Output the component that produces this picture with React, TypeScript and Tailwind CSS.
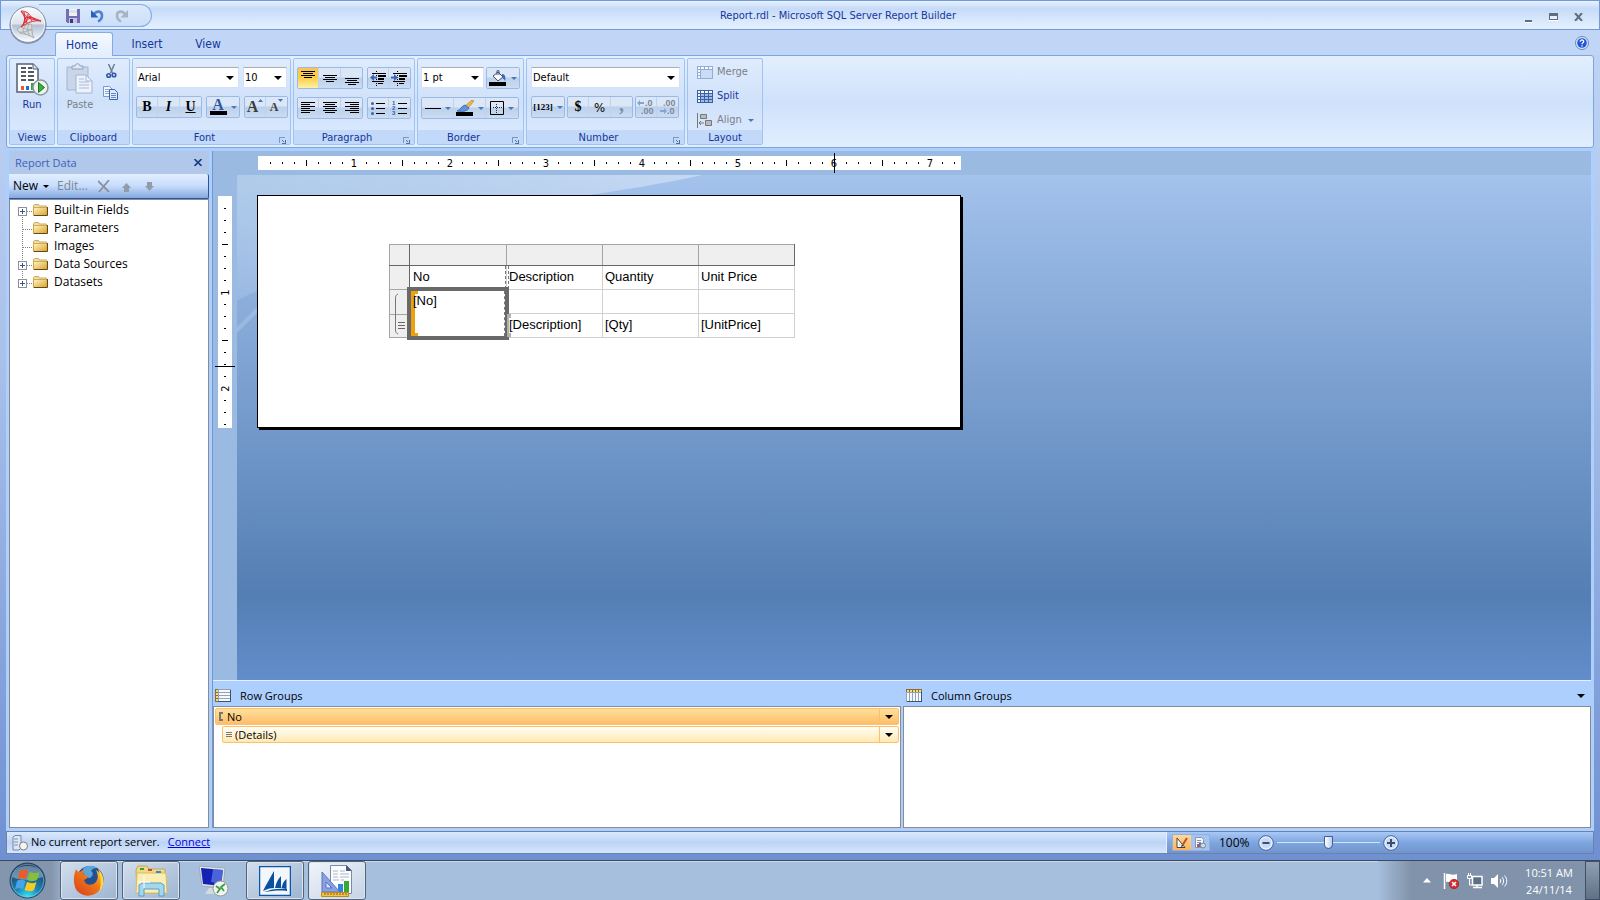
import { clsx } from "clsx"
import type { ReactNode } from "react"

const ui = "font-['Open_Sans','Noto_Sans',sans-serif]"
const tahoma = "font-['DejaVu_Sans_Condensed','DejaVu_Sans',sans-serif]"

/* ---------- small shared pieces ---------- */

function Caret({ className = "text-[#4a78b8]", size = 7 }: { className?: string; size?: number }) {
  return (
    <svg className={clsx("shrink-0", className)} width={size} height={Math.ceil(size / 2)} viewBox="0 0 8 4" preserveAspectRatio="none" aria-hidden="true">
      <path d="M0 0h8L4 4z" fill="currentColor" />
    </svg>
  )
}

function Combo({ label, value, className }: { label: string; value: string; className: string }) {
  return (
    <div className={clsx("relative h-[21px] border border-[#d3e2f6] border-t-[#abadb3] bg-white", className)}>
      <select aria-label={label} defaultValue={value} className={clsx(tahoma, "h-full w-full appearance-none bg-transparent pl-px text-[11px] leading-4 text-black outline-none")}>
        <option>{value}</option>
      </select>
      <span className="pointer-events-none absolute top-2 right-1">
        <Caret className="text-black" size={8} />
      </span>
    </div>
  )
}

function ButtonSet({ children }: { children: ReactNode }) {
  return <div className="flex h-[22px] divide-x divide-[#bdd3f0] rounded-[2px] border border-[#9ab9e4]">{children}</div>
}

function Tool({ label, active, wide, children }: { label: string; active?: boolean; wide?: boolean; children: ReactNode }) {
  return (
    <button
      type="button"
      aria-label={label}
      className={clsx(
        "flex h-full items-center justify-center gap-1",
        wide ? "w-8" : "w-[22px] first:w-[21px] last:w-[21px]",
        active
          ? "bg-linear-to-b from-[#fbc452] via-[#fbcf45] to-[#fff0a0]"
          : "bg-linear-to-b from-[#dbe7f6] from-45% via-[#bcd0ea] via-50% to-[#cbdcf2]",
      )}
    >
      {children}
      {wide && <Caret size={6} />}
    </button>
  )
}

function Group({ title, launcher, className, children }: { title: string; launcher?: boolean; className: string; children: ReactNode }) {
  return (
    <section aria-label={title} className={clsx("flex h-[87px] flex-col justify-between rounded-[2px] border border-[#9fc3f3] bg-linear-to-b from-[#e0ecfd] via-[#cfe1fa] to-[#dceafe]", className)}>
      {children}
      <div className={clsx("relative h-[14px] bg-[#c2d9f9] text-center text-[11px] leading-4 text-[#15369c]", launcher && "pr-[14px]")}>
        {title}
        {launcher && (
          <button type="button" aria-label={`${title} settings`} className="absolute right-1 bottom-0">
            <svg width="7" height="7" viewBox="0 0 7 7" shapeRendering="crispEdges">
              <path d="M0 6V0h6v1H1v5z" fill="#7d98bd" />
              <path d="M3 3h1v1H3zM4 4h1v1H4zM6 3h1v4H3V6h3z" fill="#51719e" />
            </svg>
          </button>
        )}
      </div>
    </section>
  )
}

function Lines({ rows, color = "#000" }: { rows: [number, number, number][]; color?: string }) {
  return (
    <svg width="16" height="16" viewBox="0 0 16 16" shapeRendering="crispEdges" aria-hidden="true">
      {rows.map(([x, y, w]) => (
        <rect key={`${x}-${y}`} x={x} y={y} width={w} height="1" fill={color} />
      ))}
    </svg>
  )
}

/* ---------- icons ---------- */

function OrbIcon() {
  return (
    <svg width="38" height="40" viewBox="0 0 38 40" aria-hidden="true">
      <defs>
        <linearGradient id="orb" x1="0" y1="0" x2="0" y2="1">
          <stop offset="0" stopColor="#fbfcfd" />
          <stop offset=".48" stopColor="#dde3ec" />
          <stop offset=".52" stopColor="#b3c1d6" />
          <stop offset="1" stopColor="#fdfeff" />
        </linearGradient>
      </defs>
      <circle cx="19" cy="20.500" r="18.500" fill="#51617d" opacity=".55" />
      <circle cx="19" cy="19.500" r="17.800" fill="url(#orb)" stroke="#8494ae" />
      <circle cx="19" cy="19.500" r="16.500" fill="none" stroke="#fff" opacity=".7" />
      <path d="M8 24c5-3 9-5 14-5l2 4c-1 4-1 7 1 10-4-1-6-3-9-4-3 0-6-1-8-5z" fill="#d8dade" />
      <path d="M8 24c5-3 9-5 14-5 2 5 0 9 3 14M8 24c2 5 6 5 9 5M12 22c3 2 8 3 11 3M17 20c-3 3-4 6-1 9 3 1 6 2 9 4M20 19c-2 4-2 8 1 12M10 27c4 1 9-1 13-3" fill="none" stroke="#a4a7ad" strokeWidth=".9" />
      <path d="M12 6c5 1 7 2 10 6l10 3c-8 0-14 2-20 7 4-4 5-9 0-16z" fill="#f7cfd1" opacity=".8" />
      <path d="M12 6c5 0 8 2 10 6l10 4c-8-1-14 2-20 6 4-4 6-8 0-16zM12 6c4 5 7 8 20 10M22 12c-3 2-6 5-10 10M15 7c1 5 1 8-1 13M19 9c0 4-1 6-3 9M16 13l6-1 5 3M18 18l-2-6M23 16l-3-5" fill="none" stroke="#d9303a" strokeWidth="1" />
    </svg>
  )
}

function SaveIcon() {
  return (
    <svg width="14" height="14" viewBox="0 0 14 14" shapeRendering="crispEdges" aria-hidden="true">
      <path d="M0 0h14v14H1l-1-1z" fill="#7270b2" />
      <path d="M3 0h8v7H3z" fill="#eef1f8" />
      <path d="M3 1h8v3H3z" fill="#dbe0ea" />
      <path d="M3 9h8v5H3z" fill="#c5c4e4" />
      <path d="M4 10h3v4H4z" fill="#3b3976" />
    </svg>
  )
}

function UndoIcon({ redo }: { redo?: boolean }) {
  return (
    <svg className={redo ? "-scale-x-100" : ""} width="13" height="14" viewBox="0 0 13 14" aria-hidden="true">
      <path d="M3 5.500C5 1.500 11 1.500 11 6.500c0 3-2 5-4 6" fill="none" stroke={redo ? "#a9b3c2" : "#4f83d6"} strokeWidth="2.600" />
      <path d="M0 1v7.500h7.500z" fill={redo ? "#a9b3c2" : "#2b5fba"} />
    </svg>
  )
}

function RunIcon() {
  return (
    <svg width="33" height="33" viewBox="0 0 33 33" aria-hidden="true">
      <path d="M1 1h16l5 5v23H1z" fill="#fff" stroke="#525f77" strokeWidth="1.500" />
      <path d="M17 1v5h5" fill="#dbe2ee" stroke="#525f77" />
      <path d="M5 5h5M12 5h4M5 9h5M12 9h6M5 13h5M12 13h6M5 17h5M12 17h6" stroke="#1d2431" strokeWidth="1.600" />
      <path d="M5 23h3v4H5z" fill="#f0562b" />
      <path d="M10 23h3v4h-3z" fill="#1e6fd0" />
      <path d="M15 20h3v7h-3z" fill="#35a53c" />
      <circle cx="24.500" cy="24.500" r="7.500" fill="#eef3f2" stroke="#8b98a0" strokeWidth="1.500" />
      <path d="M22.500 19.500l6 5-6 5z" fill="#3fae3c" stroke="#17761c" />
    </svg>
  )
}

function PasteIcon() {
  return (
    <svg width="28" height="31" viewBox="0 0 28 31" aria-hidden="true">
      <path d="M1 4h21v23H1z" fill="#c9d6ea" stroke="#a5b5d0" />
      <path d="M6 6V3h3c0-3 5-3 5 0h3v3z" fill="#dfe7f3" stroke="#8e9fbd" />
      <path d="M10 12h10l6 6v12H10z" fill="#edf3fc" stroke="#a4b4cf" />
      <path d="M20 12v6h6M13 16h5M13 19h10M13 22h10M13 25h10" fill="none" stroke="#a9bad6" />
    </svg>
  )
}

function CutIcon() {
  return (
    <svg width="11" height="15" viewBox="0 0 11 15" aria-hidden="true">
      <path d="M2.500 0l4 9M8.500 0l-4 9" stroke="#6e7e94" strokeWidth="1.500" />
      <circle cx="2.700" cy="11.500" r="1.800" fill="none" stroke="#2d57ad" strokeWidth="1.600" />
      <circle cx="8" cy="11" r="1.800" fill="none" stroke="#2d57ad" strokeWidth="1.600" />
    </svg>
  )
}

function CopyIcon() {
  return (
    <svg width="16" height="14" viewBox="0 0 16 14" aria-hidden="true">
      <path d="M.5.5h6l3 3v7h-9z" fill="#f2f7ff" stroke="#7f98c6" />
      <path d="M2 3.500h4M2 5.500h5M2 7.500h4" stroke="#86a7dd" />
      <path d="M6.500 3.500h5l3 3v7h-8z" fill="#dfeafc" stroke="#3d62ac" />
      <path d="M8 7.500h5M8 9.500h5M8 11.500h5" stroke="#5f88cf" />
    </svg>
  )
}

function IndentIcon({ increase }: { increase?: boolean }) {
  return (
    <svg width="17" height="16" viewBox="0 0 17 16" aria-hidden="true">
      <g shapeRendering="crispEdges">
        <path d="M2 3h14v1H2zM8 5h8v2H8zM8 8h6v2H8zM2 11h12v1H2zM8 13h5v1H8z" />
        <path d="M6 1h1v1H6zM6 3h1v1H6zM6 5h1v1H6zM6 7h1v1H6zM6 9h1v1H6zM6 11h1v1H6zM6 13h1v1H6zM6 15h1v1H6z" />
      </g>
      <path d={increase ? "M0 6.500h3V4l4 3.500L3 11V8.500H0z" : "M7 6.500H4V4L0 7.500 4 11V8.500h3z"} fill="#3a66b5" />
    </svg>
  )
}

function ListIcon({ numbered }: { numbered?: boolean }) {
  return (
    <svg width="16" height="16" viewBox="0 0 16 16" aria-hidden="true">
      <path d="M6 3h9v1H6zM6 8h9v1H6zM6 13h9v1H6z" shapeRendering="crispEdges" />
      {numbered ? (
        <g fill="#2f5dae" fontSize="6" fontWeight="bold" fontFamily="Liberation Sans, sans-serif">
          <text x="0" y="5">1</text>
          <text x="0" y="10">2</text>
          <text x="0" y="15">3</text>
        </g>
      ) : (
        <g fill="#3763b3">
          <circle cx="2.500" cy="3.500" r="1.500" />
          <circle cx="2.500" cy="8.500" r="1.500" />
          <circle cx="2.500" cy="13.500" r="1.500" />
        </g>
      )}
    </svg>
  )
}

function BucketIcon() {
  return (
    <svg width="18" height="16" viewBox="0 0 18 16" aria-hidden="true">
      <path d="M4 6l5-4 5 5-5 4z" fill="#f5f9ff" stroke="#40506b" />
      <path d="M8 5V1c0-1 2-1 2 0v4" fill="none" stroke="#40506b" />
      <path d="M13 4c3 0 4 3 3 7-1-2-2-3-3-3z" fill="#3a68b8" />
      <path d="M0 12h17v4H0z" />
    </svg>
  )
}

function BrushIcon() {
  return (
    <svg width="18" height="16" viewBox="0 0 18 16" aria-hidden="true">
      <path d="M16 0l2 1-6 7-3-2z" fill="#efbb3a" stroke="#9c7724" strokeWidth=".6" />
      <path d="M9 5l4 3c-1 3-6 4-12 3 4-1 4-5 8-6z" fill="#5f93e3" stroke="#2854a3" strokeWidth=".7" />
      <path d="M0 12h17v4H0z" />
    </svg>
  )
}

function BordersIcon() {
  return (
    <svg width="14" height="14" viewBox="0 0 14 14" aria-hidden="true">
      <path d="M.5.5h13v13H.5z" fill="none" stroke="#000" />
      <path d="M6.500 3v9M3 6.500h9" stroke="#333" strokeDasharray="1 1" />
    </svg>
  )
}

function GridIcon({ muted }: { muted?: boolean }) {
  const line = muted ? "#95abd0" : "#3c5f9e"
  return (
    <svg width="16" height="13" viewBox="0 0 16 13" shapeRendering="crispEdges" aria-hidden="true">
      <path d="M0 0h16v13H0z" fill={line} />
      <path d="M1 1h2v2H1zM4 1h3v2H4zM8 1h3v2H8zM12 1h3v2h-3zM1 4h2v2H1zM1 7h2v2H1zM1 10h2v2H1z" fill="#f4f8ff" />
      {muted ? <path d="M4 4h11v8H4z" fill="#c9dbf8" /> : <path d="M4 4h3v2H4zM8 4h3v2H8zM12 4h3v2h-3zM4 7h3v2H4zM8 7h3v2H8zM12 7h3v2h-3zM4 10h3v2H4zM8 10h3v2H8zM12 10h3v2h-3z" fill="#9dbcf0" />}
    </svg>
  )
}

function AlignIcon() {
  return (
    <svg width="16" height="15" viewBox="0 0 16 15" aria-hidden="true">
      <path d="M.5 0v15" stroke="#777" />
      <path d="M3.500 1.500h6v4h-6zM8.500 7.500h6v5h-6z" fill="#bbb" stroke="#777" />
      <path d="M2 10h5M4 8l-2 2 2 2" fill="none" stroke="#777" />
    </svg>
  )
}

function DecimalIcon({ increase }: { increase?: boolean }) {
  return (
    <svg width="18" height="16" viewBox="0 0 18 16" aria-hidden="true">
      <g fill="#7d8798" fontSize="9" fontWeight="bold" fontFamily="Liberation Sans, sans-serif">
        <text x={increase ? 8 : 4} y="7">{increase ? ".0" : ".00"}</text>
        <text x={increase ? 4 : 8} y="15">{increase ? ".00" : ".0"}</text>
      </g>
      <path d={increase ? "M0 4l3-3v2h4v2H3v2z" : "M8 12l-3-3v2H1v2h4v2z"} fill="#84a4d6" />
    </svg>
  )
}

function FolderIcon() {
  return (
    <svg width="15" height="12" viewBox="0 0 15 12" aria-hidden="true">
      <defs>
        <linearGradient id="folder" x1="0" y1="0" x2="1" y2="1">
          <stop offset="0" stopColor="#fff6c4" />
          <stop offset="1" stopColor="#dba129" />
        </linearGradient>
      </defs>
      <path d="M.5 1.500l1-1h4l1 1.500h7v9H.5z" fill="#f1dfa0" stroke="#c3ab6a" />
      <path d="M.5 3.500h13.500v8H.5z" fill="url(#folder)" stroke="#c99d3c" strokeWidth=".8" />
      <path d="M14.500 3v8.500H1" fill="none" stroke="#5e4a1d" />
    </svg>
  )
}

function GroupsIcon({ columns }: { columns?: boolean }) {
  return (
    <svg width="16" height="13" viewBox="0 0 16 13" shapeRendering="crispEdges" aria-hidden="true">
      <path d="M0 0h16v13H0z" fill="#93a2b8" />
      <path d="M15 1h1v12H1v-1h14z" fill="#42526e" />
      {columns ? (
        <>
          <path d="M0 0h16v3H0z" fill="#8c6d2a" />
          <path d="M1 1h2v2H1zM4 1h2v2H4zM7 1h2v2H7zM10 1h2v2h-2zM13 1h2v2h-2z" fill="#f4da84" />
          <path d="M1 4h2v8H1zM4 4h2v8H4zM7 4h2v8H7zM10 4h2v8h-2zM13 4h2v8h-2z" fill="#f7fafd" />
        </>
      ) : (
        <>
          <path d="M0 0h3v13H0z" fill="#8c6d2a" />
          <path d="M1 1h2v2H1zM1 4h2v2H1zM1 7h2v2H1zM1 10h2v2H1z" fill="#f4da84" />
          <path d="M4 1h11v2H4zM4 4h11v2H4zM4 7h11v2H4zM4 10h11v2H4z" fill="#f7fafd" />
        </>
      )}
    </svg>
  )
}

function ServerIcon() {
  return (
    <svg width="17" height="16" viewBox="0 0 17 16" aria-hidden="true">
      <path d="M1 2l2-1.500h6V13l-2 2H1z" fill="#dce6f4" stroke="#7488a8" />
      <path d="M2 4h4M2 7h4M2 10h4" stroke="#7f94b5" />
      <circle cx="11.500" cy="11" r="4" fill="#f4f4f4" stroke="#7f7f7f" />
    </svg>
  )
}

function StartIcon() {
  return (
    <svg width="37" height="37" viewBox="0 0 37 37" aria-hidden="true">
      <defs>
        <radialGradient id="start" cx=".5" cy=".98" r=".9">
          <stop offset="0" stopColor="#35e8fb" />
          <stop offset=".4" stopColor="#1b86b4" />
          <stop offset="1" stopColor="#1c3a5e" />
        </radialGradient>
      </defs>
      <circle cx="18.500" cy="18.500" r="17.500" fill="url(#start)" stroke="#25476b" />
      <circle cx="18.500" cy="18.500" r="16.300" fill="none" stroke="#9fc3da" opacity=".6" />
      <path d="M3 15C5 0 32 0 34 15c-9 3-22 4-31 0z" fill="#d4e8f5" opacity=".42" />
      <path d="M11 9c3-2 6-1 8 0l-2 8.500c-2-1-5-2-8.500 0z" fill="#ee5b25" />
      <path d="M20.500 10c3 1 6 2 10 0l-2.500 8c-3 1-6 2-9.500 0z" fill="#86bf38" />
      <path d="M8 19c3-2 6-1 8.500 0l-2.500 8.500c-2-1-5-2-8 0z" fill="#47a4e8" />
      <path d="M18 20c3 1 6 2 9.500 0l-2.500 8c-3 2-6 1-9.500 0z" fill="#fbc924" />
    </svg>
  )
}

function FirefoxIcon() {
  return (
    <svg width="32" height="32" viewBox="0 0 32 32" aria-hidden="true">
      <defs>
        <linearGradient id="fox" x1="0" y1="1" x2="1" y2="0">
          <stop offset="0" stopColor="#d93a1c" />
          <stop offset=".6" stopColor="#ef7a1a" />
          <stop offset="1" stopColor="#ffe23d" />
        </linearGradient>
      </defs>
      <circle cx="17" cy="14.500" r="13.500" fill="#24508f" />
      <path d="M10 4c4-4 10-4 14-1-3 0-5 1-6 3 3 2 2 5-1 7-4 0-8-4-7-9z" fill="#5aa6dc" />
      <path d="M3 4c1 2 2 3 4 3 2-2 4-2 5-2-2 2-2 4-1 5l4 1c0 2-2 3-4 4 1 5 7 6 11 3 4-4 3-9 1-13 9 6 9 15 3 21-8 8-21 5-24-4C0 16 1 9 3 4z" fill="url(#fox)" />
      <path d="M25 4c7 6 7 17 1 23 3-8 2-16-1-23z" fill="#ffd839" />
    </svg>
  )
}

function ExplorerIcon() {
  return (
    <svg width="33" height="32" viewBox="0 0 33 32" aria-hidden="true">
      <path d="M1 5l2-4h9l2 3h16l1 24H2z" fill="#eed88a" stroke="#c5a953" />
      <path d="M2 8h29l1 20H1z" fill="#fbeeb2" stroke="#d7bd68" />
      <path d="M5 3h4v2H5z" fill="#36a33c" />
      <path d="M13 4h4v2h-4z" fill="#d6452b" />
      <path d="M21 6h5v2h-5z" fill="#2f89d6" />
      <path d="M4 20l3-2h19l3 2v11h-5v-7H9v7H4z" fill="#a4d6ee" stroke="#5a9fc5" />
      <path d="M9 11v12M3 17h12" stroke="#fff" />
    </svg>
  )
}

function RemoteIcon() {
  return (
    <svg width="32" height="32" viewBox="0 0 32 32" aria-hidden="true">
      <path d="M12 23h9l2 6H8z" fill="#d5dadf" />
      <path d="M2 1l26 2-2 20L5 21z" fill="#dfe4ea" stroke="#a0a9b5" />
      <path d="M4 3l22 2-2 16L6 19z" fill="#1222b4" />
      <path d="M16 4l10 1-2 14-10-2z" fill="#6f90f5" opacity=".6" />
      <circle cx="23.500" cy="23.500" r="7.500" fill="#f1f4f0" stroke="#929a94" />
      <path d="M19 21l4 3-3 4M28 19l-4 3 3 4" fill="none" stroke="#3e9c46" strokeWidth="1.800" />
    </svg>
  )
}

function DynamicsIcon() {
  return (
    <svg width="32" height="30" viewBox="0 0 32 30" aria-hidden="true">
      <path d="M.5.500h31v29H.5z" fill="#f3f6fa" stroke="#0c58a8" strokeWidth="1.500" />
      <path d="M4 25c3-6 7-13 11-20v17c-4 0-7 1-11 3zM16 22c1-5 3-9 6-12v12zM22.500 22c1-4 2-7 5-9v10z" fill="#0b4fa0" />
      <path d="M5 26c7-3 15-4 23-3v2c-8-1-15 0-23 1z" fill="#0b4fa0" />
    </svg>
  )
}

function ReportBuilderIcon() {
  return (
    <svg width="32" height="32" viewBox="0 0 32 32" aria-hidden="true">
      <path d="M9.500.5h16l5 5v23h-21z" fill="#fafcfe" stroke="#7c8ba5" />
      <path d="M25 0v6h6" fill="#4a5a78" />
      <path d="M12 6h5M19 6h5M12 9h5M19 9h9M12 12h5M19 12h9M12 15h6M20 15h3" stroke="#aeb8ca" />
      <path d="M17 19h5v8h-5z" fill="#2f85d8" />
      <path d="M23 16h5v11h-5z" fill="#39a932" />
      <path d="M1 7v20h18zM5 17v6h6z" fill="#8ba0e4" fillRule="evenodd" stroke="#5d73bd" />
      <path d="M.5 27.500h27v4H.5z" fill="#f2c24a" stroke="#b98b24" />
      <path d="M4 28v2M7 28v2M10 28v2M13 28v2M16 28v2M19 28v2M22 28v2M25 28v2" stroke="#7f5e15" />
    </svg>
  )
}

/* ---------- title bar + ribbon ---------- */

function TitleBar() {
  return (
    <header className="relative z-20 flex h-[30px] items-center border border-[#6f9adb] bg-linear-to-b from-[#e8f2ff] via-[#c6dbf8] via-28% to-[#e6f1ff]">
      <button type="button" aria-label="Report Builder menu" className="absolute top-1 left-2">
        <OrbIcon />
      </button>
      <div className="ml-[38px] flex h-[23px] w-[113px] items-center gap-[11px] rounded-r-full border border-l-0 border-[#86abe2] bg-linear-to-b from-[#dce9fb] to-[#cbdff9] pt-[2px] pl-[27px]">
        <button type="button" aria-label="Save"><SaveIcon /></button>
        <button type="button" aria-label="Undo"><UndoIcon /></button>
        <button type="button" aria-label="Redo"><UndoIcon redo /></button>
      </div>
      <h1 className="flex-1 pt-[2px] text-center text-[11px] text-[#15369c]">Report.rdl - Microsoft SQL Server Report Builder</h1>
      <div className="flex items-center gap-4 pt-1 pr-4">
        <button type="button" aria-label="Minimize">
          <svg width="9" height="12" viewBox="0 0 9 12" shapeRendering="crispEdges"><path d="M1 9h7v2H1z" fill="#5f6d80" /><path d="M1 11h7v1H1z" fill="#fff" /></svg>
        </button>
        <button type="button" aria-label="Restore">
          <svg width="9" height="8" viewBox="0 0 9 8" shapeRendering="crispEdges"><path d="M0 0h9v7H0z" fill="#5f6d80" /><path d="M1 3h7v3H1z" fill="#e8f0fb" /><path d="M0 7h9v1H0z" fill="#fff" /></svg>
        </button>
        <button type="button" aria-label="Close">
          <svg width="9" height="8" viewBox="0 0 9 8"><path d="M1 0l7 8M8 0L1 8" stroke="#5f6d80" strokeWidth="2" /></svg>
        </button>
      </div>
    </header>
  )
}

function TabRow() {
  return (
    <nav className="flex h-[25px] items-end bg-[#c1d6f6] pr-[11px] pl-[55px] text-[12px] leading-4 text-[#15369c]">
      <a href="#home" className="z-10 -mb-px flex h-6 w-[58px] items-center justify-center rounded-t-[3px] border border-b-0 border-[#84abe5] bg-linear-to-b from-[#f5f9ff] to-[#e3eefd] pr-1 pt-px">Home</a>
      <a href="#insert" className="flex h-[22px] w-[68px] items-center justify-center">Insert</a>
      <a href="#view" className="flex h-[22px] w-[54px] items-center justify-center">View</a>
      <button type="button" aria-label="Help" className="mb-[5px] ml-auto">
        <svg width="14" height="14" viewBox="0 0 14 14">
          <circle cx="7" cy="7" r="6.500" fill="#dbe8fb" stroke="#6b88c0" />
          <circle cx="7" cy="7" r="4.800" fill="#1e56d6" />
          <path d="M5.200 5.700c0-2.400 3.700-2.200 3.500 0C8.600 6.900 7 6.800 7 8.200M7 9.200v1.300" stroke="#fff" strokeWidth="1.300" fill="none" />
        </svg>
      </button>
    </nav>
  )
}

const serif = "font-['Liberation_Serif',serif] font-bold text-black leading-none"

function Ribbon() {
  return (
    <div className="mx-[6px] flex gap-[2px] rounded-[3px] border border-[#7fa5de] bg-linear-to-b from-[#e3effe] via-[#cfe1fb] to-[#e1eefe] p-[2px] text-[11px] text-[#15369c]">
      <Group title="Views" className="w-[46px]">
        <button type="button" className="flex flex-col items-center gap-px pt-1 leading-4">
          <RunIcon />
          Run
        </button>
      </Group>
      <Group title="Clipboard" className="w-[73px]">
        <div className="flex justify-between pt-1 pr-[10px] pl-2">
          <button type="button" className="flex flex-col items-center gap-[3px] leading-4 text-[#7a7f88]">
            <PasteIcon />
            Paste
          </button>
          <div className="flex flex-col items-center gap-[7px] pt-px">
            <button type="button" aria-label="Cut"><CutIcon /></button>
            <button type="button" aria-label="Copy"><CopyIcon /></button>
          </div>
        </div>
      </Group>
      <Group title="Font" launcher className="w-[159px]">
        <div className="flex flex-col gap-2 px-[3px] pt-2">
          <div className="flex gap-1">
            <Combo label="Font family" value="Arial" className="w-[103px]" />
            <Combo label="Font size" value="10" className="w-11" />
          </div>
          <div className="flex gap-1">
            <ButtonSet>
              <Tool label="Bold"><b className={clsx(serif, "text-[14px]")}>B</b></Tool>
              <Tool label="Italic"><i className={clsx(serif, "text-[14px]")}>I</i></Tool>
              <Tool label="Underline"><u className={clsx(serif, "text-[14px]")}>U</u></Tool>
            </ButtonSet>
            <ButtonSet>
              <Tool label="Font color" wide>
                <span className="flex h-4 w-[17px] items-center justify-center border-b-4 border-black font-['Liberation_Serif',serif] text-[16px] leading-none font-bold text-[#2e57a0]">A</span>
              </Tool>
            </ButtonSet>
            <ButtonSet>
              <Tool label="Grow font">
                <span className="flex items-start"><b className="font-['Liberation_Serif',serif] text-[16px] leading-4 text-[#3c3c3c]">A</b><span className="rotate-180"><Caret size={5} /></span></span>
              </Tool>
              <Tool label="Shrink font">
                <span className="flex items-start"><b className="font-['Liberation_Serif',serif] text-[12px] leading-5 text-[#3c3c3c]">A</b><span className="pt-[2px]"><Caret size={5} /></span></span>
              </Tool>
            </ButtonSet>
          </div>
        </div>
      </Group>
      <Group title="Paragraph" launcher className="w-[122px]">
        <div className="flex flex-col gap-2 px-[3px] pt-2">
          <div className="flex gap-1">
            <ButtonSet>
              <Tool label="Align top" active><Lines rows={[[1, 1, 14], [3, 3, 10], [1, 5, 14], [4, 7, 8]]} /></Tool>
              <Tool label="Align middle"><Lines rows={[[1, 5, 14], [3, 7, 10], [1, 9, 14], [4, 11, 8]]} /></Tool>
              <Tool label="Align bottom"><Lines rows={[[1, 8, 14], [3, 10, 10], [1, 12, 14], [4, 14, 8]]} /></Tool>
            </ButtonSet>
            <ButtonSet>
              <Tool label="Decrease indent"><IndentIcon /></Tool>
              <Tool label="Increase indent"><IndentIcon increase /></Tool>
            </ButtonSet>
          </div>
          <div className="flex gap-1">
            <ButtonSet>
              <Tool label="Align left"><Lines rows={[[1, 2, 14], [1, 4, 9], [1, 6, 14], [1, 8, 9], [1, 10, 14], [1, 12, 9]]} /></Tool>
              <Tool label="Center"><Lines rows={[[1, 2, 14], [3, 4, 10], [1, 6, 14], [3, 8, 10], [1, 10, 14], [3, 12, 10]]} /></Tool>
              <Tool label="Align right"><Lines rows={[[1, 2, 14], [6, 4, 9], [1, 6, 14], [6, 8, 9], [1, 10, 14], [6, 12, 9]]} /></Tool>
            </ButtonSet>
            <ButtonSet>
              <Tool label="Bullets"><ListIcon /></Tool>
              <Tool label="Numbering"><ListIcon numbered /></Tool>
            </ButtonSet>
          </div>
        </div>
      </Group>
      <Group title="Border" launcher className="w-[107px]">
        <div className="flex flex-col gap-2 px-[3px] pt-2">
          <div className="flex gap-[2px]">
            <Combo label="Border width" value="1 pt" className="w-16" />
            <ButtonSet>
              <Tool label="Fill color" wide><BucketIcon /></Tool>
            </ButtonSet>
          </div>
          <div className="flex">
            <ButtonSet>
              <Tool label="Border style" wide><span className="h-px w-4 bg-black" /></Tool>
              <Tool label="Border color" wide><BrushIcon /></Tool>
              <Tool label="Borders" wide><BordersIcon /></Tool>
            </ButtonSet>
          </div>
        </div>
      </Group>
      <Group title="Number" launcher className="w-[159px]">
        <div className="flex flex-col gap-2 px-1 pt-2">
          <Combo label="Number format" value="Default" className="w-[149px]" />
          <div className="flex gap-[2px]">
            <ButtonSet>
              <Tool label="Placeholder styles" wide>
                <span className="font-['Liberation_Serif',serif] text-[9px] leading-[11px] font-bold whitespace-nowrap text-black">[123]</span>
              </Tool>
            </ButtonSet>
            <ButtonSet>
              <Tool label="Currency"><span className={clsx(serif, "text-[14px]")}>$</span></Tool>
              <Tool label="Percent"><span className="text-[13px] leading-none text-black">%</span></Tool>
              <Tool label="Thousands separator"><span className="pb-[6px] font-['Liberation_Serif',serif] text-[20px] leading-3 font-bold text-[#8391a8]">,</span></Tool>
            </ButtonSet>
            <ButtonSet>
              <Tool label="Increase decimals"><DecimalIcon increase /></Tool>
              <Tool label="Decrease decimals"><DecimalIcon /></Tool>
            </ButtonSet>
          </div>
        </div>
      </Group>
      <Group title="Layout" className="w-[76px]">
        <div className="flex flex-col items-start gap-2 pt-[5px] pl-[9px] leading-4">
          <button type="button" className="flex items-center gap-1 text-[#7a7f88]"><GridIcon muted />Merge</button>
          <button type="button" className="flex items-center gap-1"><GridIcon />Split</button>
          <button type="button" className="flex items-center gap-1 text-[#7a7f88]"><AlignIcon />Align<span className="pl-[2px]"><Caret size={6} /></span></button>
        </div>
      </Group>
    </div>
  )
}

/* ---------- report data pane ---------- */

const treeItems = [
  { name: "Built-in Fields", expandable: true },
  { name: "Parameters", expandable: false },
  { name: "Images", expandable: false },
  { name: "Data Sources", expandable: true },
  { name: "Datasets", expandable: true },
]

function ReportData() {
  return (
    <aside className={clsx(ui, "flex w-[200px] shrink-0 flex-col")}>
      <div className="flex h-[23px] items-center justify-between bg-[#b1c8eb] pr-[7px] pl-[6px]">
        <h2 className="pt-px text-[11px] text-[#3c62b6]">Report Data</h2>
        <button type="button" aria-label="Close pane">
          <svg width="8" height="7" viewBox="0 0 8 7"><path d="M.5 0l7 7M7.500 0l-7 7" stroke="#1b3f87" strokeWidth="1.600" /></svg>
        </button>
      </div>
      <div className="flex h-[25px] items-center rounded-r-[2px] border-r border-b border-[#2c539f] bg-linear-to-b from-[#e2eefe] via-[#c7dcfb] to-[#85a8df] pl-1 text-[12px]">
        <button type="button" className="flex items-center gap-[5px] text-black">New<Caret className="text-black" size={6} /></button>
        <button type="button" className="ml-2 text-[#7e8793]">Edit...</button>
        <button type="button" aria-label="Delete" className="ml-[10px]">
          <svg width="12" height="12" viewBox="0 0 12 12"><path d="M0 1l11 11M11 0L1 12" stroke="#8b929d" strokeWidth="1.800" /></svg>
        </button>
        <button type="button" aria-label="Move up" className="ml-3 pt-[2px]">
          <svg width="9" height="9" viewBox="0 0 9 9"><path d="M4.500 0L9 5H7v4H2V5H0z" fill="#929baa" /></svg>
        </button>
        <button type="button" aria-label="Move down" className="ml-[14px] pt-px">
          <svg width="9" height="9" viewBox="0 0 9 9"><path d="M4.500 9L0 4h2V0h5v4h2z" fill="#929baa" /></svg>
        </button>
      </div>
      <ul className="flex-1 border border-[#868b94] bg-white pt-px pl-2 text-[12px] leading-[18px] text-black">
        {treeItems.map((item, i) => (
          <li key={item.name} className="flex h-[18px] items-center">
            <svg width="15" height="18" viewBox="0 0 15 18" shapeRendering="crispEdges" aria-hidden="true">
              <path d={clsx(i > 0 && "M4.500 0v10", i < treeItems.length - 1 && "M4.500 10v8", "M5 10.500h10")} fill="none" stroke="#808080" strokeDasharray="1 1" />
              {item.expandable && (
                <>
                  <path d="M.5 6.500h8v8h-8z" fill="#fff" stroke="#919191" />
                  <path d="M2 10h5v1H2zM4 8h1v5H4z" fill="#3254a8" />
                </>
              )}
            </svg>
            <FolderIcon />
            <span className="pl-[6px]">{item.name}</span>
          </li>
        ))}
      </ul>
    </aside>
  )
}

/* ---------- design surface ---------- */

function Mark({ index, vertical }: { index: number; vertical?: boolean }) {
  return (
    <span className={clsx("flex shrink-0 items-center justify-center", vertical ? "h-3 w-full" : "h-full w-3")}>
      {index % 8 === 0 ? (
        <span className={vertical ? "-rotate-90" : ""}>{index / 8}</span>
      ) : index % 4 === 0 ? (
        <span className={clsx("bg-black", vertical ? "h-px w-[6px]" : "h-[6px] w-px")} />
      ) : (
        <span className={clsx("bg-black", vertical ? "h-px w-[2px]" : "h-[2px] w-px")} />
      )}
    </span>
  )
}

function Ruler() {
  return (
    <div className={clsx(tahoma, "relative ml-[45px] flex h-[14px] w-[703px] bg-white pl-[6px] text-[11px] leading-none text-black")}>
      {Array.from({ length: 58 }, (_, i) => (
        <Mark key={i} index={i + 1} />
      ))}
      <span className="absolute -top-[3px] left-[576px] h-5 w-px bg-black" />
    </div>
  )
}

function VerticalRuler() {
  return (
    <div className="w-6 shrink-0 pt-[21px] pl-[5px]">
      <div className={clsx(tahoma, "relative flex h-[232px] w-[14px] flex-col bg-white pt-[6px] text-[11px] leading-none text-black")}>
        {Array.from({ length: 19 }, (_, i) => (
          <Mark key={i} index={i + 1} vertical />
        ))}
        <span className="absolute top-[170px] -left-[3px] h-px w-5 bg-black" />
      </div>
    </div>
  )
}

const cell = "border border-[#d0d0d0] px-[2px] align-top text-left font-normal"
const handle = "border border-[#a5a5a5] bg-[#efefef] p-0"

function Tablix() {
  return (
    <table className="table-fixed border-collapse font-['Liberation_Sans',Arial,sans-serif] text-[13px] leading-[22px] text-black">
      <colgroup>
        <col className="w-[20px]" />
        <col className="w-[97px]" />
        <col className="w-[96px]" />
        <col className="w-[96px]" />
        <col className="w-[96px]" />
      </colgroup>
      <tbody>
        <tr className="h-[21px]">
          <td className={clsx(handle, "border-r-[#666] border-b-[#666]")} />
          <td className={clsx(handle, "border-b-[#666]")} />
          <td className={clsx(handle, "border-b-[#666]")} />
          <td className={clsx(handle, "border-b-[#666]")} />
          <td className={clsx(handle, "border-r-[#666] border-b-[#666]")} />
        </tr>
        <tr className="h-6">
          <td className={clsx(handle, "border-r-[#666]")} />
          <th scope="col" className={clsx(cell, "relative pl-[3px]")}>
            No
            <span className="absolute inset-y-0 -right-[3px] w-1 border-x border-dashed border-[#777]" />
          </th>
          <th scope="col" className={cell}>Description</th>
          <th scope="col" className={cell}>Quantity</th>
          <th scope="col" className={cell}>Unit Price</th>
        </tr>
        <tr className="h-6">
          <td rowSpan={2} className={handle}>
            <svg className="block" width="19" height="46" viewBox="0 0 19 46" aria-hidden="true">
              <path d="M0 23.500h19" stroke="#a5a5a5" />
              <path d="M8 3c-2 1-2.500 2-2.500 4v32c0 2 .5 3 2.500 4" fill="none" stroke="#777" />
              <path d="M8 31.500h7M8 34.500h7M8 37.500h7" stroke="#666" />
            </svg>
          </td>
          <td rowSpan={2} className={clsx(cell, "relative pl-[3px]")}>
            <span className="absolute -inset-[3px] border-4 border-[#696969]">
              <span className="absolute inset-y-0 left-0 w-1 bg-[#eca20f]" />
              <span className="absolute top-0 left-1 h-[3px] w-[3px] bg-[#eca20f]" />
              <span className="absolute bottom-0 left-1 h-[3px] w-[3px] bg-[#eca20f]" />
              <span className="absolute inset-y-0 right-0 border-r border-dashed border-[#777]" />
            </span>
            <span className="relative">[No]</span>
          </td>
          <td className={cell} />
          <td className={cell} />
          <td className={cell} />
        </tr>
        <tr className="h-6">
          <td className={clsx(cell, "relative")}>
            <span className="absolute inset-y-0 left-0 w-1 border-y-4 border-l-2 border-[#b0b0b0]" />
            <span className="relative">[Description]</span>
          </td>
          <td className={cell}>[Qty]</td>
          <td className={cell}>[UnitPrice]</td>
        </tr>
      </tbody>
    </table>
  )
}

function DesignSurface() {
  return (
    <section aria-label="Design surface" className="flex flex-1 flex-col bg-[#9bbae1] pt-[5px]">
      <Ruler />
      <div className="mt-[5px] flex flex-1">
        <VerticalRuler />
        <div className="relative flex-1 bg-linear-to-b from-[#a3c2ec] via-[#547fb4] via-83% to-[#638dca] pt-5 pl-5">
          <svg className="absolute top-0 left-0" width="480" height="220" viewBox="0 0 480 220" aria-hidden="true">
            <defs>
              <linearGradient id="swoosh" x1="0" y1="0" x2="1" y2="0">
                <stop offset="0" stopColor="#b0cbea" />
                <stop offset="1" stopColor="#c5d9f4" />
              </linearGradient>
              <linearGradient id="swooshFade" x1="0" y1="0" x2="0" y2="1">
                <stop offset="0" stopColor="#9fbfe9" stopOpacity="0" />
                <stop offset="1" stopColor="#8fb0de" stopOpacity=".7" />
              </linearGradient>
            </defs>
            <path d="M0 0h465C430 8 380 16 345 21 200 52 80 85 0 125z" fill="url(#swoosh)" />
            <path d="M0 0h465C430 8 380 16 345 21 200 52 80 85 0 125z" fill="url(#swooshFade)" />
            <path d="M0 152l20-20v6L0 158z" fill="#b9d0ef" opacity=".4" />
          </svg>
          <div className="relative h-[233px] w-[704px] border border-black bg-white pt-12 pl-[131px] shadow-[2px_2px_0_#000]">
            <Tablix />
          </div>
        </div>
      </div>
    </section>
  )
}

/* ---------- grouping pane ---------- */

function GroupRow({ name, selected }: { name: string; selected?: boolean }) {
  return (
    <div
      className={clsx(
        "flex h-[17px] items-center rounded-[2px] border border-[#fdbf6b] bg-linear-to-b",
        selected ? "from-[#ffe09a] to-[#ffbd69]" : "ml-[7px] from-[#fffdf6] to-[#ffe9b0]",
      )}
    >
      {selected ? (
        <svg className="ml-[3px]" width="4" height="9" viewBox="0 0 4 9" aria-hidden="true"><path d="M4 1H1v7h3" fill="none" stroke="#777" strokeWidth="2" /></svg>
      ) : (
        <svg className="ml-[3px]" width="6" height="7" viewBox="0 0 6 7" shapeRendering="crispEdges" aria-hidden="true"><path d="M0 1h6v1H0zM0 3h6v1H0zM0 5h6v1H0z" fill="#777" /></svg>
      )}
      <span className={clsx("flex-1", selected ? "pl-1" : "pl-[3px]")}>{name}</span>
      <button type="button" aria-label={`${name} options`} className="flex h-full w-[19px] items-center justify-center border-l border-[#fdbf6b]">
        <Caret className="text-black" size={8} />
      </button>
    </div>
  )
}

function Grouping() {
  return (
    <section aria-label="Grouping" className={clsx(ui, "flex gap-[2px] border-t border-[#e5f0ff] text-[11px] leading-[14px] text-black")}>
      <div className="flex-1">
        <h2 className="flex h-[25px] items-center gap-[9px] pt-1 pl-[2px]"><GroupsIcon />Row Groups</h2>
        <div className="flex h-[122px] flex-col gap-px border border-[#868b94] bg-white p-px">
          <GroupRow name="No" selected />
          <GroupRow name="(Details)" />
        </div>
      </div>
      <div className="flex-1">
        <h2 className="flex h-[25px] items-center gap-[9px] pt-1 pr-[6px] pl-[3px]">
          <GroupsIcon columns />
          Column Groups
          <button type="button" aria-label="Grouping options" className="ml-auto"><Caret className="text-black" size={8} /></button>
        </h2>
        <div className="h-[122px] border border-[#868b94] bg-white" />
      </div>
    </section>
  )
}

/* ---------- bottom bars ---------- */

function StatusBar() {
  return (
    <footer className={clsx(ui, "mx-[6px] mb-[6px] flex h-[23px] border border-[#6b83a9] text-[11px] text-black")}>
      <div className="flex flex-1 items-center bg-linear-to-b from-[#dce9fc] via-[#bdd4f5] to-[#d5e5fc] pl-[5px]">
        <ServerIcon />
        <span className="pl-[2px]">No current report server.</span>
        <a href="#connect" className="ml-2 text-[#0000e8] underline">Connect</a>
      </div>
      <div className="flex w-[427px] items-center border-l border-[#e3efff] bg-linear-to-b from-[#a9c8f5] via-[#7ea6df] to-[#7094cf] pl-[5px]">
        <div className="flex h-[17px] border border-[#8fb0e0]">
          <button type="button" aria-label="Design view" className="flex w-[18px] items-center justify-center bg-linear-to-b from-[#ffd79a] to-[#ffb454]">
            <svg width="12" height="12" viewBox="0 0 12 12"><path d="M1 1v9.500h8z" fill="#fff" stroke="#444" /><path d="M3 6v2.500h2z" fill="#b9c7dd" /><path d="M11 1L6 9" stroke="#b0562b" strokeWidth="2" /><path d="M6.500 8L5 11" stroke="#333" /></svg>
          </button>
          <button type="button" aria-label="Preview" className="flex w-[18px] items-center justify-center bg-[#a7c4ee]">
            <svg width="11" height="12" viewBox="0 0 11 12"><path d="M.5.5h6l2 2v8h-8z" fill="#f4f7fc" stroke="#8294b2" /><path d="M2 3.500h4M2 5.500h4" stroke="#8294b2" /><path d="M2 7h2v3H2z" fill="#d6492f" /><path d="M4 6h2v4H4z" fill="#3f78cc" /><circle cx="8" cy="8.500" r="2.500" fill="#cfe0d2" stroke="#7488a8" /></svg>
          </button>
        </div>
        <span className="w-[48px] pl-[9px] text-[12px]">100%</span>
        <button type="button" aria-label="Zoom out">
          <svg width="16" height="16" viewBox="0 0 16 16"><circle cx="8" cy="8" r="7.300" fill="#c7dbf6" stroke="#47679c" /><circle cx="8" cy="8" r="6" fill="none" stroke="#eef5ff" /><path d="M4.500 7h7v2h-7z" fill="#3d4f6d" /></svg>
        </button>
        <input
          type="range"
          aria-label="Zoom"
          min="0"
          max="100"
          defaultValue="50"
          className="mx-[3px] h-[13px] w-[103px] appearance-none bg-[linear-gradient(#d6e4f8,#d6e4f8)] bg-size-[100%_1px] bg-center bg-no-repeat [&::-webkit-slider-thumb]:h-[13px] [&::-webkit-slider-thumb]:w-[9px] [&::-webkit-slider-thumb]:appearance-none [&::-webkit-slider-thumb]:bg-[linear-gradient(90deg,#fff,#b9d0f0)] [&::-webkit-slider-thumb]:rounded-b-full [&::-webkit-slider-thumb]:border [&::-webkit-slider-thumb]:border-[#3e5f98]"
        />
        <button type="button" aria-label="Zoom in">
          <svg width="16" height="16" viewBox="0 0 16 16"><circle cx="8" cy="8" r="7.300" fill="#c7dbf6" stroke="#47679c" /><circle cx="8" cy="8" r="6" fill="none" stroke="#eef5ff" /><path d="M4 7h3V4h2v3h3v2H9v3H7V9H4z" fill="#3d4f6d" /></svg>
        </button>
      </div>
    </footer>
  )
}

const pinned = [
  { label: "Firefox", icon: <FirefoxIcon />, running: true },
  { label: "Windows Explorer", icon: <ExplorerIcon />, running: true },
  { label: "Remote Desktop", icon: <RemoteIcon />, running: false },
  { label: "Dynamics NAV", icon: <DynamicsIcon />, running: true },
  { label: "Report Builder", icon: <ReportBuilderIcon />, running: true, active: true },
]

function Taskbar() {
  return (
    <div className="flex h-10 border-t border-[#3b4a60] bg-[#a6bfdc] shadow-[inset_0_1px_0_#c9d9eb]">
      <div className="flex w-[60px] items-center bg-linear-to-r from-[#8496ad] from-85% to-[#94a8c1] pl-[9px]">
        <button type="button" aria-label="Start"><StartIcon /></button>
      </div>
      <div className="flex gap-1">
        {pinned.map((app) => (
          <button
            key={app.label}
            type="button"
            aria-label={app.label}
            className={clsx(
              "flex h-[39px] w-[58px] items-center justify-center rounded-[3px] border",
              app.running ? "border-[#53647b] shadow-[inset_0_0_0_1px_#d9e4f1]" : "border-transparent",
              app.active ? "bg-linear-to-br from-[#f1f5fa] to-[#c4d3e6]" : app.running && "bg-linear-to-br from-[#d3dfed] to-[#9db4d1]",
            )}
          >
            {app.icon}
          </button>
        ))}
      </div>
      <div className={clsx(ui, "ml-auto flex items-center bg-linear-to-r from-[#a6bfdc] to-[#8093aa] to-15% pl-[45px] text-white")}>
        <button type="button" aria-label="Show hidden icons"><svg width="8" height="5" viewBox="0 0 8 5"><path d="M0 4.500h8L4 0z" fill="#fff" /></svg></button>
        <svg className="ml-3" width="16" height="16" viewBox="0 0 16 16" aria-label="Action Center">
          <path d="M1.500 0v16" stroke="#fff" strokeWidth="1.500" />
          <path d="M3 1c4-1 5 2 11 0v8C9 11 7 8 3 9z" fill="#fff" />
          <circle cx="11" cy="11" r="4.700" fill="#d8292b" stroke="#8d1517" strokeWidth=".6" />
          <path d="M9 9l4 4M13 9l-4 4" stroke="#fff" strokeWidth="1.500" />
        </svg>
        <svg className="ml-2" width="16" height="16" viewBox="0 0 16 16" aria-label="Network">
          <path d="M5.500 3.500h9.500v8.500H5.500z" fill="#5d7088" stroke="#fff" strokeWidth="1.500" />
          <path d="M6 14.500h9M10 12v2" stroke="#fff" strokeWidth="1.500" />
          <path d="M.5 2.500h4v3h-4zM1.500 0v2M3.500 0v2M2.500 6v6h3" fill="none" stroke="#fff" />
        </svg>
        <svg className="ml-2" width="17" height="14" viewBox="0 0 17 14" aria-label="Volume">
          <path d="M0 4h3l4-4v14l-4-4H0z" fill="#fff" />
          <path d="M9 5c1 1 1 3 0 4M11 3c2 2 2 6 0 8M13.500 1.500c3 3 3 8 0 11" fill="none" stroke="#fff" />
        </svg>
        <time className="ml-3 w-[58px] text-center text-[11px] leading-[17px]">10:51 AM<br />24/11/14</time>
        <button type="button" aria-label="Show desktop" className="ml-[7px] h-[39px] w-[15px] border border-[#3f5065] bg-linear-to-b from-[#8fa0b4] to-[#5f7186]" />
      </div>
    </div>
  )
}

export default function App() {
  return (
    <div className={clsx(tahoma, "flex min-h-screen flex-col bg-linear-to-b from-[#c1d6f6] via-[#a9c0ea] via-40% to-[#6a8ccf]")}>
      <TitleBar />
      <TabRow />
      <Ribbon />
      <main className="mx-[6px] flex flex-1 gap-[3px] bg-[#adcffe] p-[3px]">
        <ReportData />
        <div className="flex flex-1 flex-col border-l border-[#6f97d6]">
          <DesignSurface />
          <Grouping />
        </div>
      </main>
      <StatusBar />
      <Taskbar />
    </div>
  )
}
